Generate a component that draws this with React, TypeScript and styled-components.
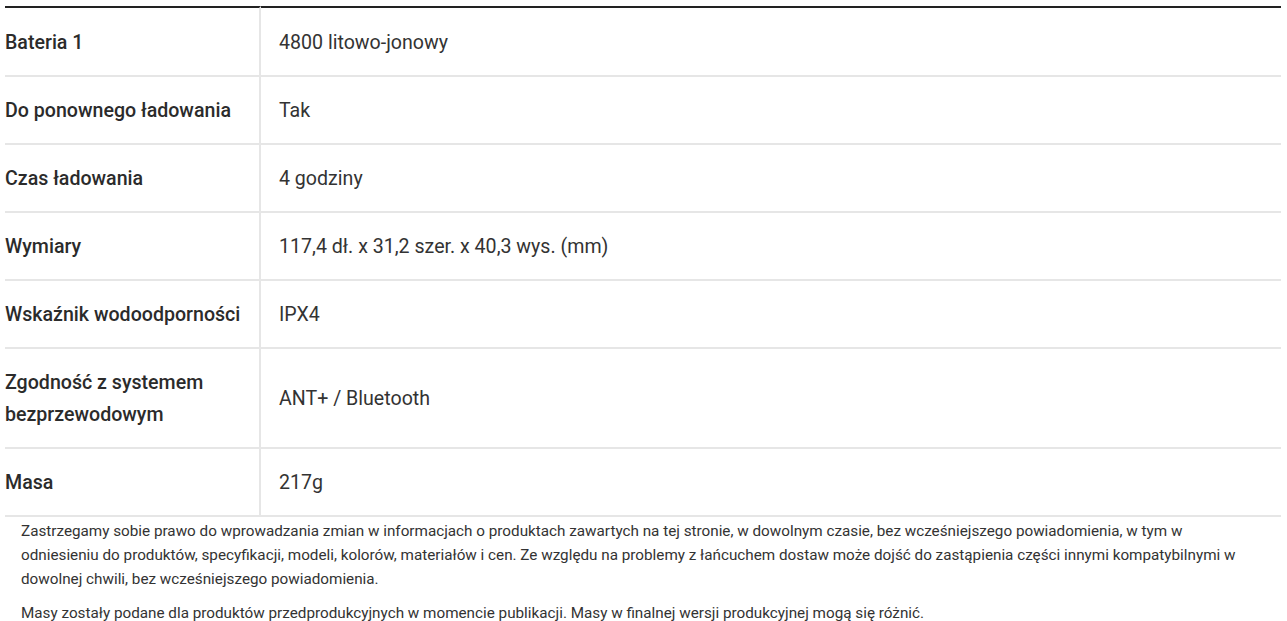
import React from 'react';
import styled, { createGlobalStyle } from 'styled-components';

const GlobalStyle = createGlobalStyle`
  body {
    margin: 0;
    background: #fff;
    font-family: Roboto, "Liberation Sans", sans-serif;
    color: #333;
  }
`;

const specs: [string, string][] = [
  ['Bateria 1', '4800 litowo-jonowy'],
  ['Do ponownego ładowania', 'Tak'],
  ['Czas ładowania', '4 godziny'],
  ['Wymiary', '117,4 dł. x 31,2 szer. x 40,3 wys. (mm)'],
  ['Wskaźnik wodoodporności', 'IPX4'],
  ['Zgodność z systemem bezprzewodowym', 'ANT+ / Bluetooth'],
  ['Masa', '217g'],
];

const App: React.FC = () => {
  return (
    <Page>
      <GlobalStyle />
      <SpecTable>
        {specs.map(([label, value], i) => (
          <Row key={label}>
            <Label first={i === 0}>{label}</Label>
            <Value first={i === 0}>{value}</Value>
          </Row>
        ))}
      </SpecTable>
      <Notes>
        <Note>
          Zastrzegamy sobie prawo do wprowadzania zmian w informacjach o produktach zawartych na tej stronie, w dowolnym czasie, bez wcześniejszego powiadomienia, w tym w odniesieniu do produktów, specyfikacji, modeli, kolorów, materiałów i cen. Ze względu na problemy z łańcuchem dostaw może dojść do zastąpienia części innymi kompatybilnymi w dowolnej chwili, bez wcześniejszego powiadomienia.
        </Note>
        <Note>
          Masy zostały podane dla produktów przedprodukcyjnych w momencie publikacji. Masy w finalnej wersji produkcyjnej mogą się różnić.
        </Note>
      </Notes>
    </Page>
  );
};

const Page = styled.div`
  padding: 6px 6px 0 5px;
`;

const SpecTable = styled.div`
  display: flex;
  flex-direction: column;
`;

const Row = styled.div`
  display: grid;
  grid-template-columns: 256px 1fr;
  border-bottom: 2px solid #e6e6e6;
`;

const Label = styled.div<{ first: boolean }>`
  padding: ${({ first }) => (first ? '19px' : '18px')} 12px 16px 0;
  border-right: 2px solid #e6e6e6;
  border-top: ${({ first }) => (first ? '2px solid #222' : 'none')};
  font-size: 19.6px;
  line-height: 32px;
  font-weight: 500;
  color: #2b2b2b;
`;

const Value = styled.div<{ first: boolean }>`
  display: flex;
  align-items: center;
  padding: ${({ first }) => (first ? '19px' : '18px')} 0 16px 18px;
  border-top: ${({ first }) => (first ? '2px solid #222' : 'none')};
  font-size: 19.6px;
  line-height: 32px;
  color: #333;
`;

const Notes = styled.div`
  padding: 2px 30px 0 16px;
`;

const Note = styled.p`
  margin: 0 0 10px;
  font-size: 15.25px;
  line-height: 24px;
  color: #333;
`;

export default App;
